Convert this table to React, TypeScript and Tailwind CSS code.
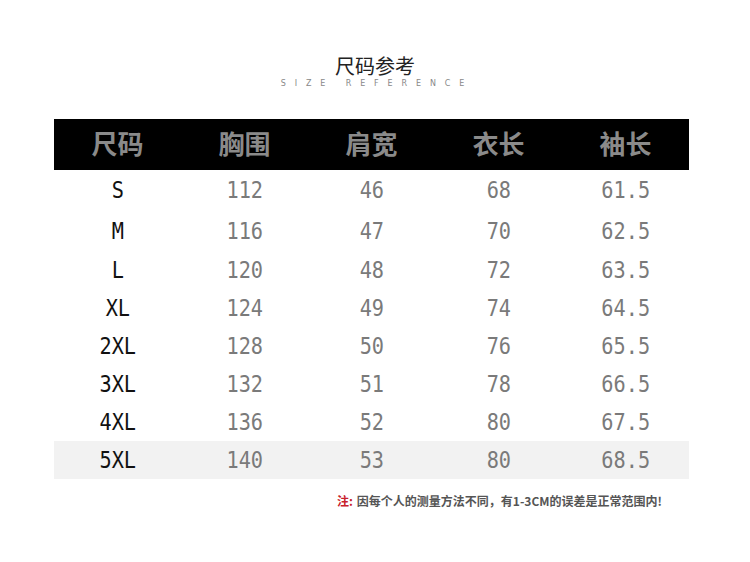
const rows = [
  ['S', '112', '46', '68', '61.5'],
  ['M', '116', '47', '70', '62.5'],
  ['L', '120', '48', '72', '63.5'],
  ['XL', '124', '49', '74', '64.5'],
  ['2XL', '128', '50', '76', '65.5'],
  ['3XL', '132', '51', '78', '66.5'],
  ['4XL', '136', '52', '80', '67.5'],
  ['5XL', '140', '53', '80', '68.5'],
];

const heads = ['尺码', '胸围', '肩宽', '衣长', '袖长'];
const rowH = ['h-[41px]', 'h-[40px]', 'h-[38px]', 'h-[38px]', 'h-[38px]', 'h-[38px]', 'h-[38px]', 'h-[38px]'];

export default function App() {
  return (
    <div className="w-[750px] h-[562px] bg-white font-['Noto_Sans_CJK_SC',sans-serif] flex flex-col items-center">
      <div className="mt-[52px] text-[20px] leading-[28px] text-[#222]">尺码参考</div>
      <div className="mt-[-2px] ml-[4px] text-[8px] leading-[12px] tracking-[8.9px] text-[#888] font-['DejaVu_Sans',sans-serif]">
        SIZE REFERENCE
      </div>

      <div className="mt-[29px] w-[635px] self-start ml-[54px]">
        <div className="grid grid-cols-5 h-[51px] pb-[4px] bg-black items-center">
          {heads.map((h) => (
            <div key={h} className="text-center text-[26px] font-bold text-[#8a8a8a] leading-none">
              {h}
            </div>
          ))}
        </div>
        {rows.map((r, i) => (
          <div
            key={r[0]}
            className={`grid grid-cols-5 items-center ${rowH[i]} ${i === rows.length - 1 ? 'bg-[#f2f2f2]' : 'bg-white'}`}
          >
            {r.map((c, j) => (
              <div key={j} className="text-center leading-none">
                <span
                  className={`inline-block scale-x-[0.88] text-[23px] font-['DejaVu_Sans_Mono',monospace] ${j === 0 ? 'text-[#111]' : 'text-[#7a7a7a]'}`}
                >
                  {c}
                </span>
              </div>
            ))}
          </div>
        ))}
      </div>

      <div className="w-[635px] self-start ml-[54px] mt-[16px] flex justify-end pr-[27px] text-[12px] font-bold text-[#555] leading-none">
        <span className="text-[#c8202a]">注:</span>
        <span className="ml-[4px]">因每个人的测量方法不同，有1-3CM的误差是正常范围内!</span>
      </div>
    </div>
  );
}
